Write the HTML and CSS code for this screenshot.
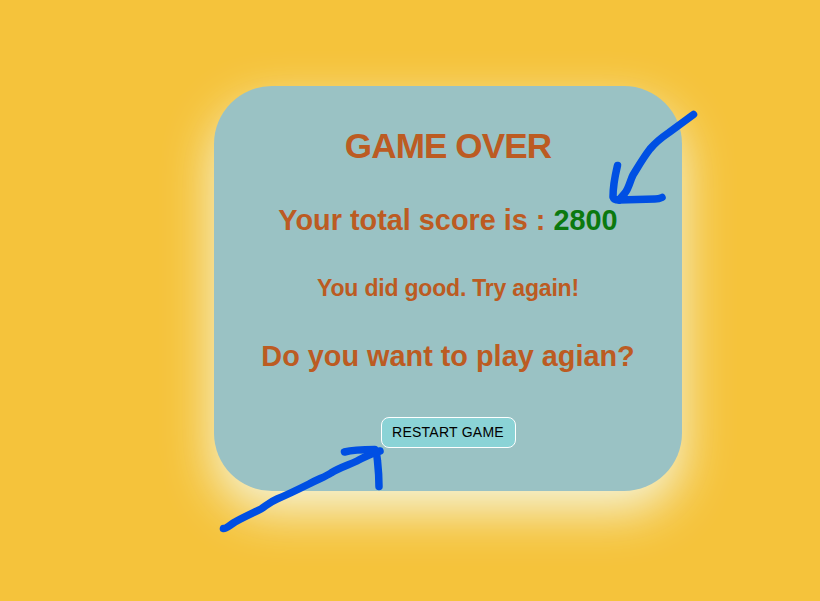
FILE: index.html
```html
<!DOCTYPE html>
<html lang="en">
<head>
<meta charset="utf-8">
<title>Game Over</title>
<link rel="stylesheet" href="styles.css">
</head>
<body>
<main class="card">
  <h1 class="title">GAME OVER</h1>
  <h2 class="line">Your total score is : <span class="score">2800</span></h2>
  <h3 class="note">You did good. Try again!</h3>
  <h2 class="line question">Do you want to play agian?</h2>
  <button class="restart" type="button">RESTART GAME</button>
</main>
<svg class="arrows" viewBox="0 0 820 601" aria-hidden="true">
  <path d="M693.500 114.500L669 132.500C661 138 655 143 650 149C643 158 638 167 633 175C630 181 629 188 625 193L619 200"/>
  <path d="M617.500 165.500C615 176 613 184 613 197Q614 200 619 200L655 199Q659 199 662 197.500"/>
  <path d="M223.500 528.500C226 529 230 525 235 522C244 517 253 513 261 509C267 505 270 502 277 499C289 494 299 489 309 484C318 479 325 477 331 473C341 467 349 465 357 461C365 457 371 453 380 451"/>
  <path d="M344.500 452C354 449.500 364 449.500 375 449.500Q377 454 377.500 461Q379 475 379 486.500"/>
</svg>
</body>
</html>
```
FILE: styles.css
```css
body {
  margin: 0;
  height: 601px;
  overflow: hidden;
  background: #f5c33b;
  font-family: "Liberation Sans", Arial, sans-serif;
}

.card {
  box-sizing: border-box;
  width: 468px;
  height: 405px;
  margin: 86px 0 0 214px;
  padding-top: 39px;
  border-radius: 58px;
  background: #9ac2c4;
  box-shadow: 0 20px 50px #f5f5dc;
  color: #bc5b22;
  text-align: center;
}

.title,
.line,
.note {
  margin: 0;
  font-weight: bold;
}

.title {
  font-size: 35.1px;
  line-height: 41px;
  letter-spacing: -0.9px;
}

.line {
  margin-top: 37px;
  font-size: 28.85px;
  line-height: 34px;
}

.note {
  margin-top: 38px;
  font-size: 23px;
  line-height: 26px;
  letter-spacing: -0.2px;
}

.question {
  margin-top: 38px;
}

.score {
  color: #0b790f;
}

.restart {
  width: 135px;
  height: 31px;
  margin-top: 44px;
  padding: 0 0 2px;
  border: 1px solid #fff;
  border-radius: 8px;
  background: #8bd3d6;
  color: #000;
  font: 14px "Liberation Sans", Arial, sans-serif;
  letter-spacing: 0.25px;
}

.arrows {
  position: absolute;
  inset: 0;
  width: 820px;
  height: 601px;
  fill: none;
  stroke: #004fe3;
  stroke-width: 7.5;
  stroke-linecap: round;
  stroke-linejoin: round;
  pointer-events: none;
}
```
